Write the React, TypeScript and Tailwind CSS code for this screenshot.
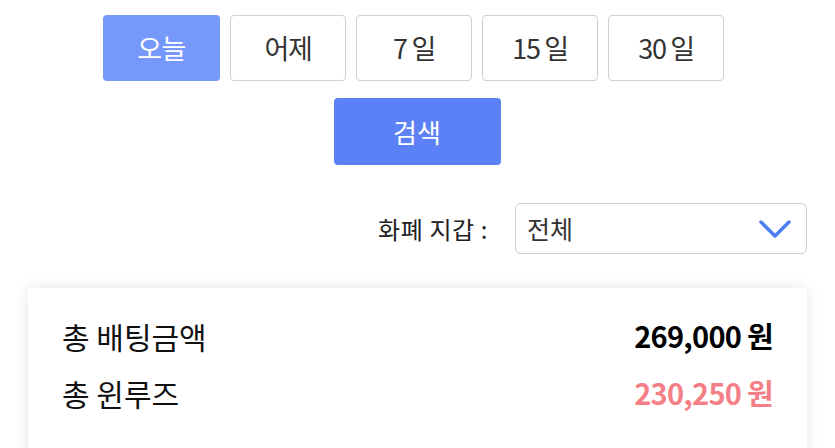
export default function App() {
  const days = ["어제", "7 일", "15 일", "30 일"];
  return (
    <div
      className="w-[835px] h-[448px] overflow-hidden bg-white"
      style={{ fontFamily: '"Noto Sans CJK KR", "Noto Sans", sans-serif' }}
    >
      {/* Date buttons */}
      <div className="flex justify-center gap-[10px] pt-[15px] pr-[8px]">
        <button className="w-[117px] h-[66px] rounded-[4px] bg-[#7698fb] text-white text-[27px] tracking-tight">
          오늘
        </button>
        {days.map((d) => (
          <button
            key={d}
            className="w-[116px] h-[66px] rounded-[4px] border border-[#cfcfcf] bg-white text-[#333] text-[27px] tracking-tighter"
          >
            {d}
          </button>
        ))}
      </div>

      <div className="flex justify-center pt-[17px] pr-[1px]">
        <button className="w-[167px] h-[67px] rounded-[4px] bg-[#5c80f6] text-white text-[26px]">
          검색
        </button>
      </div>

      {/* Currency filter */}
      <div className="flex items-center justify-end pt-[38px] pr-[28px]">
        <span className="text-[24px] text-[#222] mr-[27px] tracking-wide">화폐 지갑 :</span>
        <div className="w-[292px] h-[51px] rounded-[6px] border border-[#cdcdcd] flex items-center justify-between pl-[11px] pr-[14px]">
          <span className="text-[25px] text-[#333]">전체</span>
          <svg width="34" height="20" viewBox="0 0 34 20" fill="none">
            <path d="M3 3 L17 17 L31 3" stroke="#4f7cf5" strokeWidth="3.5" strokeLinecap="round" strokeLinejoin="round" />
          </svg>
        </div>
      </div>

      {/* Summary card */}
      <div className="mx-[28px] mt-[34px] h-[200px] bg-white shadow-[0_0_14px_rgba(0,0,0,0.1)] px-[34px] pt-[27px]">
        <div className="flex justify-between items-center h-[42px]">
          <span className="text-[30px] text-[#111]">총 배팅금액</span>
          <span className="text-[29px] font-bold text-black tracking-tight">269,000 원</span>
        </div>
        <div className="flex justify-between items-center h-[42px] mt-[15px]">
          <span className="text-[30px] text-[#111]">총 윈루즈</span>
          <span className="text-[29px] font-bold text-[#f47f86] tracking-tight">230,250 원</span>
        </div>
      </div>
    </div>
  );
}
